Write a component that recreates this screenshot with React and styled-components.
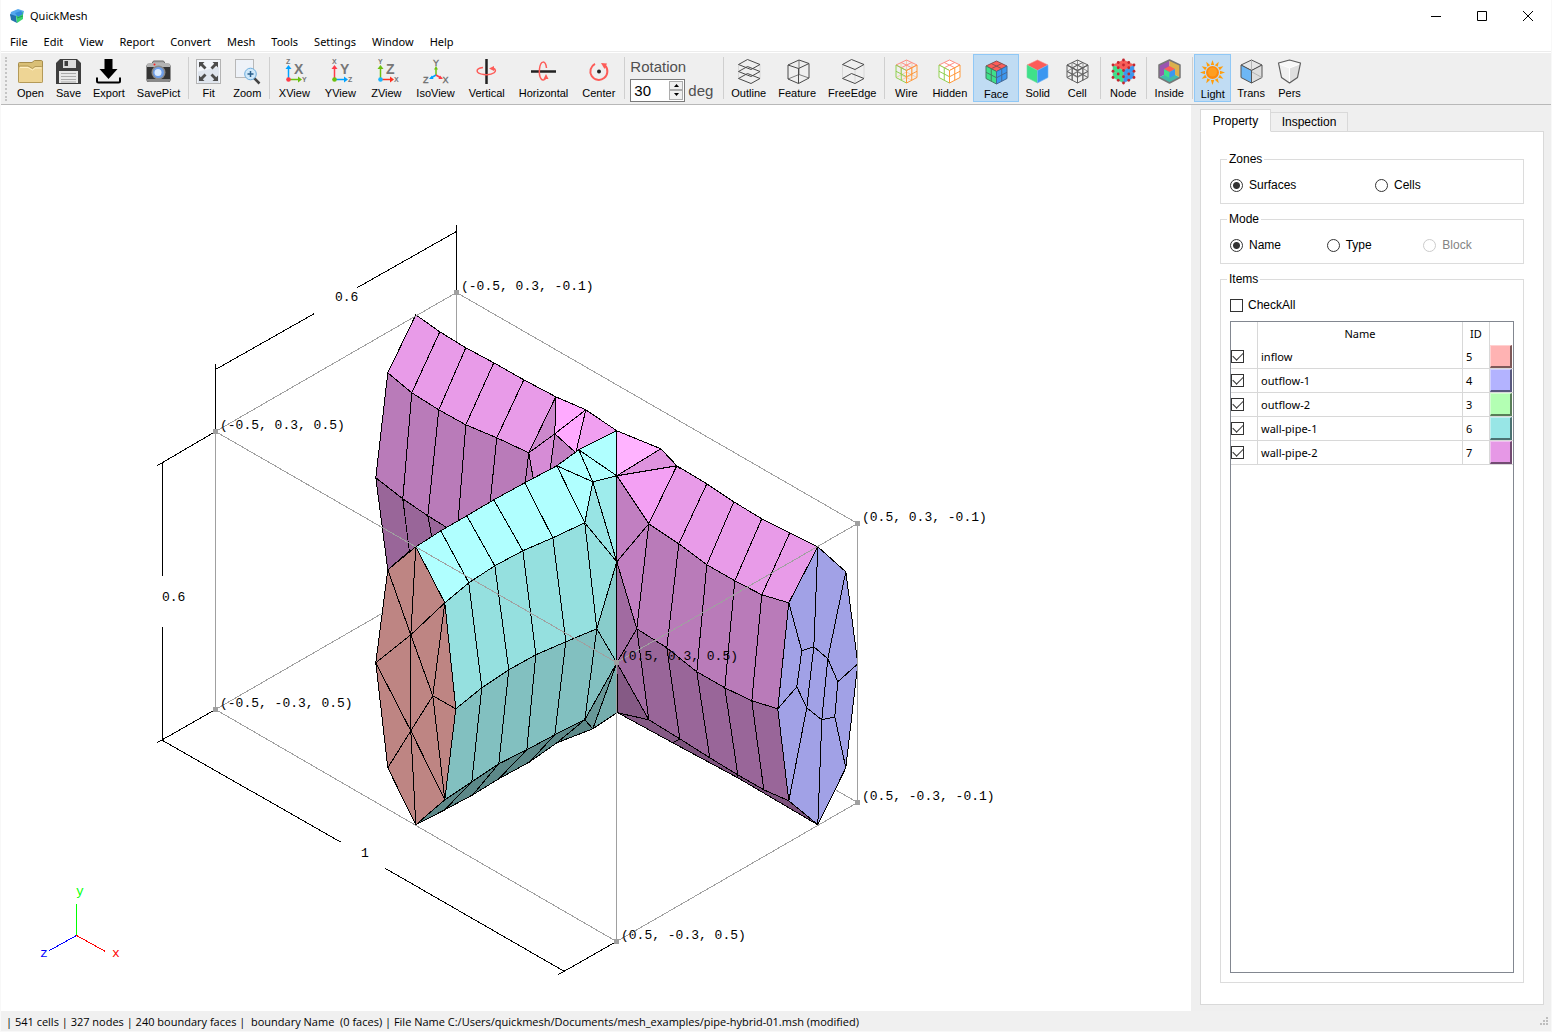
import React, { useState } from 'react';
import styled, { createGlobalStyle, css } from 'styled-components';

const GlobalStyle = createGlobalStyle`
  html, body, #root {
    height: 100%;
  }

  body {
    margin: 0;
    background-color: #fff;
    color: #000;
    font-family: 'Noto Sans', 'Open Sans', sans-serif;
    font-size: 11px;
  }

  * {
    box-sizing: border-box;
  }
`;

const arial = "'Liberation Sans', Arial, sans-serif";

const Window = styled.div`
  display: flex;
  flex-direction: column;
  height: 100%;
  min-height: 600px;
  border: 1px solid #f8f8f8;
  border-top: none;
`;

const TitleBar = styled.header`
  display: flex;
  align-items: center;
  height: 31px;
  padding-left: 8px;
`;

const Title = styled.h1`
  flex: 1;
  margin: 0 0 0 5px;
  font-size: 11px;
  font-weight: 400;
`;

const CaptionButton = styled.button`
  display: flex;
  align-items: center;
  justify-content: center;
  width: 46px;
  height: 30px;
  padding: 0;
  border: none;
  background: none;
`;

const MenuBar = styled.nav`
  display: flex;
  align-items: center;
  height: 21px;
  padding-left: 1px;
  border-bottom: 1px solid #ececec;
`;

const MenuButton = styled.button`
  padding: 0 8px;
  border: none;
  background: none;
  font: inherit;
  color: inherit;
`;

const ToolBar = styled.div`
  display: flex;
  align-items: center;
  height: 53px;
  padding: 0 0 2px 10px;
  border-top: 1px solid #fff;
  border-bottom: 1px solid #b8b8b8;
  background-color: #efefef;
  font-family: ${arial};
  position: relative;

  &::before {
    content: '';
    position: absolute;
    left: 4px;
    top: 4px;
    bottom: 3px;
    border-left: 2px dotted #c4c4c4;
  }
`;

const Separator = styled.div`
  width: 1px;
  height: 42px;
  margin: 0 1px 0 2px;
  background-color: #cfcfcf;
`;

const ToolButton = styled.button`
  display: flex;
  flex-direction: column;
  align-items: center;
  gap: 2px;
  height: 48px;
  min-width: ${(props) => props.$minWidth}px;
  padding: 4px ${(props) => props.$pad}px 0;
  border: 1px solid transparent;
  background: none;
  font-family: inherit;
  font-size: 11px;
  line-height: 14px;
  color: #000;

  ${(props) => props.$active && css`
    padding-top: 5px;
    border-color: #90c8f6;
    background-color: #c0dcf3;
  `}
`;

const Icon = styled.svg`
  width: 25px;
  height: 25px;
  flex: none;
  overflow: visible;
`;

const Rotation = styled.div`
  display: flex;
  flex-direction: column;
  gap: 4px;
  width: 95px;
  margin-top: 4px;
  padding-left: 4px;
  font-size: 15px;
  line-height: 17px;
  color: #505050;
`;

const RotationRow = styled.div`
  display: flex;
  align-items: center;
  gap: 3px;
`;

const SpinBox = styled.div`
  display: flex;
  width: 55px;
  height: 23px;
  padding: 1px;
  border: 1px solid #7a7a7a;
  background-color: #fff;
`;

const SpinInput = styled.input`
  flex: 1;
  min-width: 0;
  padding: 0 2px;
  border: none;
  outline: none;
  font-family: inherit;
  font-size: 15px;
`;

const SpinButtons = styled.div`
  display: flex;
  flex-direction: column;
  width: 14px;
`;

const SpinButton = styled.button`
  display: flex;
  align-items: center;
  justify-content: center;
  flex: 1;
  padding: 0;
  border: 1px solid #acacac;
  background-color: #f0f0f0;
`;

const Main = styled.main`
  display: flex;
  flex: 1;
  min-height: 0;
`;

const Viewport = styled.section`
  flex: 1;
  min-width: 0;
  background-color: #fff;
`;

const Scene = styled.svg`
  display: block;
  width: 100%;
  height: 100%;
`;

const Side = styled.aside`
  display: flex;
  flex-direction: column;
  width: 360px;
  padding: 5px 7px 6px 9px;
  background-color: #efefef;
  font-family: ${arial};
  font-size: 12px;
`;

const Tabs = styled.div`
  display: flex;
  align-items: flex-end;
  height: 22px;
  margin-bottom: -1px;
  z-index: 1;
`;

const Tab = styled.button`
  height: ${(props) => (props.$active ? 23 : 20)}px;
  width: ${(props) => (props.$active ? 71 : 77)}px;
  padding: 0;
  border: 1px solid #d9d9d9;
  border-left-width: ${(props) => (props.$active ? 1 : 0)}px;
  border-bottom-color: ${(props) => (props.$active ? '#fff' : '#d9d9d9')};
  background-color: ${(props) => (props.$active ? '#fff' : '#f0f0f0')};
  font: inherit;
  color: #000;
`;

const Pane = styled.div`
  display: flex;
  flex-direction: column;
  gap: 8px;
  flex: 1;
  min-height: 0;
  padding: 20px 19px 21px;
  border: 1px solid #d9d9d9;
  background-color: #fff;
`;

const Group = styled.fieldset`
  display: flex;
  flex-direction: column;
  min-width: 0;
  min-height: 0;
  margin: 0;
  padding: 10px 9px 9px;
  border: 1px solid #dcdcdc;
  ${(props) => props.$grow && css`
    flex: 1;
  `}
`;

const Legend = styled.legend`
  margin-left: -3px;
  padding: 0 2px;
  line-height: 14px;
`;

const Options = styled.div`
  display: grid;
  grid-template-columns: repeat(${(props) => props.$columns}, 1fr);
  gap: 6px;
`;

const Label = styled.label`
  display: flex;
  align-items: center;
  gap: ${(props) => (props.$tight ? 5 : 6)}px;
  height: 18px;
  color: ${(props) => (props.$disabled ? '#838383' : '#000')};
`;

const Radio = styled.input`
  appearance: none;
  width: 13px;
  height: 13px;
  margin: 0;
  border: 1px solid #333;
  border-radius: 50%;
  background-color: #fff;

  &:checked {
    background-image: radial-gradient(circle, #333 0 3px, #fff 4px);
  }

  &:disabled {
    border-color: #ccc;
  }
`;

const Check = styled.input`
  appearance: none;
  display: block;
  position: relative;
  width: 13px;
  height: 13px;
  margin: 0;
  border: 1px solid #333;
  background-color: #fff;

  &:checked::after {
    content: '';
    position: absolute;
    left: 1px;
    top: 1px;
    width: 9px;
    height: 5px;
    border: solid #333;
    border-width: 0 0 1px 1px;
    transform: rotate(-45deg);
  }
`;

const TableFrame = styled.div`
  flex: 1;
  min-height: 0;
  margin-top: 7px;
  border: 1px solid #828790;
`;

const Table = styled.table`
  width: 100%;
  table-layout: fixed;
  border-collapse: separate;
  border-spacing: 0;
  font-family: 'Noto Sans', 'Open Sans', sans-serif;
  font-size: 11px;

  th, td {
    padding: 0;
    border-right: 1px solid #d8d8d8;
    font-weight: 400;
    line-height: 14px;
  }

  th {
    height: 23px;
  }

  td {
    height: 24px;
    padding-left: 3px;
    border-bottom: 1px solid #d8d8d8;
  }

  td:first-child, td:last-child {
    padding-left: 0;
  }

  th:last-child, td:last-child {
    border-right: none;
  }
`;

const CheckColumn = styled.col`
  width: 27px;
`;

const IdColumn = styled.col`
  width: 27px;
`;

const ColorColumn = styled.col`
  width: 23px;
`;

const Swatch = styled.button`
  display: block;
  width: 22px;
  height: 23px;
  padding: 0;
  border: 1px solid rgba(255, 255, 255, 0.4);
  border-right: 2px solid rgba(0, 0, 0, 0.5);
  border-bottom: 2px solid rgba(0, 0, 0, 0.5);
  background-color: ${(props) => props.$color};
`;

const StatusBar = styled.footer`
  display: flex;
  align-items: center;
  justify-content: space-between;
  height: 20px;
  padding: 0 3px 0 5px;
  background-color: #f0f0f0;
  font-family: 'Open Sans', 'Noto Sans', sans-serif;
  white-space: pre;
`;

const menus = ['File', 'Edit', 'View', 'Report', 'Convert', 'Mesh', 'Tools', 'Settings', 'Window', 'Help'];

const RED = '#fd5c58';
const GREEN = '#3fe08a';
const BLUE = '#3b97f0';

// corners of the isometric cube used by most of the display icons
const T = [12.5, 1];
const R = [23, 6];
const L = [2, 6];
const C = [12.5, 11.5];
const B = [12.5, 24];
const LB = [2, 18.5];
const RB = [23, 18.5];
const M = [12.5, 13];

const pts = (list) => list.map((p) => p.join(',')).join(' ');
const mix = (a, b, t) => [a[0] + (b[0] - a[0]) * t, a[1] + (b[1] - a[1]) * t];

const gridPath = (a, b, c, d, n) => {
  let path = '';
  for (let i = 0; i <= n; i += 1) {
    path += `M${mix(a, b, i / n)}L${mix(d, c, i / n)}M${mix(a, d, i / n)}L${mix(b, c, i / n)}`;
  }
  return path;
};

const Cube = ({ fill = ['none', 'none', 'none'], line = ['none', 'none', 'none'], n = 1, width = 1 }) => (
  <g strokeLinejoin="round">
    {[[T, R, C, L], [L, C, B, LB], [C, R, RB, B]].map((face, i) => (
      <g key={i}>
        <polygon points={pts(face)} fill={fill[i]} />
        <path d={gridPath(...face, n)} fill="none" stroke={line[i]} strokeWidth={width} />
      </g>
    ))}
  </g>
);

const AxisIcon = ({ big, up, right, upColor, rightColor, dot }) => (
  <Icon viewBox="0 0 25 25" fontFamily="Liberation Sans" fill="#777">
    <path d="M6.5 20V9" stroke={upColor} strokeWidth="1.5" />
    <path d="M3.5 10L6.5 6L9.5 10Z" fill={upColor} />
    <path d="M7 20.5H17" stroke={rightColor} strokeWidth="1.5" />
    <path d="M16 17.5L20 20.5L16 23.5Z" fill={rightColor} />
    <circle cx="6.5" cy="20.5" r="2.3" fill={dot} />
    <text x="4" y="5" fontSize="7" fontWeight="700">{up}</text>
    <text x="20" y="23" fontSize="7" fontWeight="700">{right}</text>
    <text x="12" y="15" fontSize="14" fontWeight="700">{big}</text>
  </Icon>
);

const layer = (y) => `M11.500 ${y}L24 ${y + 5}L15 ${y + 10}L2.500 ${y + 5}Z`;

const icons = {
  Open: (
    <Icon viewBox="0 0 25 25">
      <path d="M.5 23V4.500Q.5 3.500 1.500 3.500H14L16.500 1.500H23.500Q24.500 1.500 24.500 3V23Z" fill="#d9bf76" stroke="#a68d4d" />
      <path d="M.5 9Q.5 7 2 7H10L14.500 9.500L17 7.500H23.500Q24.500 7.500 24.500 9V22.500Q24.500 23.500 23.500 23.500H1.500Q.5 23.500.5 22.500Z" fill="#eed595" stroke="#b49a58" />
      <path d="M2 8.500H10L14.500 11L17.500 9H23.500" fill="none" stroke="#fff0c4" />
    </Icon>
  ),
  Save: (
    <Icon viewBox="0 0 25 25">
      <path d="M4 0H21L25 4V25H0V4Z" fill="#3e3e3e" />
      <path d="M7 1H20V9H7Z" fill="#dcdcdc" />
      <path d="M8.500 2H12V7H8.500Z" fill="#3e3e3e" />
      <path d="M3 12H22V24H3Z" fill="#e8e8e8" />
      <path d="M5 14.500H20M5 17.500H20M5 20.500H20M5 23H20" stroke="#aaa" />
    </Icon>
  ),
  Export: (
    <Icon viewBox="0 0 25 25">
      <path d="M8.500 0H16.500V10H21.500L12.500 20L3.500 10H8.500Z" />
      <path d="M1 18.500V22Q1 23.500 2.500 23.500H22.500Q24 23.500 24 22V18.500" fill="none" stroke="#000" strokeWidth="2" />
    </Icon>
  ),
  SavePict: (
    <Icon viewBox="0 0 25 25">
      <path d="M5 6L7.500 2H17.500L20 6Z" fill="#aaa" stroke="#666" />
      <rect x="0.5" y="5" width="24" height="18" rx="2" fill="#343434" />
      <path d="M1 8V6Q1 4 3 4H22Q24 4 24 6V8Z" fill="#b4b4b4" />
      <path d="M1 20H24V22Q23 23 22 23H3Q2 23 1 22Z" fill="#888" />
      <circle cx="12.500" cy="13.500" r="7" fill="#898989" />
      <circle cx="12.500" cy="13.500" r="5.500" fill="#6e9ee8" />
      <circle cx="12" cy="13.500" r="3.500" fill="#d9eaff" />
      <circle cx="8.500" cy="5.500" r="1" fill="#f22" />
    </Icon>
  ),
  Fit: (
    <Icon viewBox="0 0 25 25">
      <rect x="0.5" y="0.5" width="24" height="24" fill="#f2f5fa" stroke="#b3b3b3" />
      <path d="M2 12.500L23 8V24H2Z" fill="#dfe5ee" />
      <path
        d="M3 3H8.500L6.800 4.800L10.500 8.500L8.500 10.500L4.800 6.800L3 8.500ZM22 3V8.500L20.200 6.800L16.500 10.500L14.500 8.500L18.200 4.800L16.500 3ZM3 22V16.500L4.800 18.200L8.500 14.500L10.500 16.500L6.800 20.200L8.500 22ZM22 22H16.500L18.200 20.200L14.500 16.500L16.500 14.500L20.200 18.200L22 16.500Z"
        fill="#4c4c4c"
      />
    </Icon>
  ),
  Zoom: (
    <Icon viewBox="0 0 25 25">
      <rect x="0.5" y="0.5" width="18" height="18" fill="#eef2f8" stroke="#b8b8b8" />
      <path d="M19 19L24.500 24.500" stroke="#444" strokeWidth="2.500" />
      <circle cx="15.500" cy="15" r="5.800" fill="#cfe8fa" stroke="#6eaede" />
      <path d="M15.500 12V18M12.500 15H18.500" stroke="#2a5f8c" strokeWidth="1.500" />
    </Icon>
  ),
  XView: <AxisIcon big="X" up="Z" right="Y" upColor="#00a2ff" rightColor="#6cc00e" dot="#ff3a48" />,
  YView: <AxisIcon big="Y" up="X" right="Z" upColor="#ff3a48" rightColor="#00a2ff" dot="#6cc00e" />,
  ZView: <AxisIcon big="Z" up="Y" right="X" upColor="#6cc00e" rightColor="#ff3020" dot="#18b4ff" />,
  IsoView: (
    <Icon viewBox="0 0 25 25" fontFamily="Liberation Sans" fontSize="9" fill="#6c6c6c" stroke="#6c6c6c" strokeWidth="0.3">
      <g strokeWidth="1.500">
        <path d="M13 16V9" stroke="#6cc00e" />
        <path d="M13 16L8 19" stroke="#00a2ff" />
        <path d="M13 16L18 19" stroke="#ff3a48" />
      </g>
      <g stroke="none">
        <path d="M11 10.500L13 7L15 10.500Z" fill="#6cc00e" />
        <path d="M9 16.500L6 20L10.500 20Z" fill="#00a2ff" />
        <path d="M17 16.500L20 20L15.500 20Z" fill="#ff3a48" />
      </g>
      <text x="10" y="6.500">Y</text>
      <text x="0" y="24">Z</text>
      <text x="19.500" y="24">X</text>
    </Icon>
  ),
  Vertical: (
    <Icon viewBox="0 0 25 25">
      <path d="M12.500 0V25" stroke="#222" strokeWidth="2.500" />
      <path d="M9 8.500C1 9.500 1 14.500 10 15.500C19 16.500 25 12 19 9" fill="none" stroke={RED} strokeWidth="1.500" />
      <path d="M15 9.500L20 7L20 12Z" fill={RED} />
    </Icon>
  ),
  Horizontal: (
    <Icon viewBox="0 0 25 25">
      <path d="M0 12.500H25" stroke="#222" strokeWidth="2.500" />
      <path d="M15.500 9C14.500 1 9.500 1 8.500 10C7.500 19 11.500 24 15 19" fill="none" stroke={RED} strokeWidth="1.500" />
      <path d="M15 15L17.500 20L12.500 20Z" fill={RED} />
    </Icon>
  ),
  Center: (
    <Icon viewBox="0 0 25 25">
      <path d="M9 4.800A8.500 8.500 0 1 0 19 6.500" fill="none" stroke={RED} strokeWidth="2" />
      <path d="M15 4L21 4.500L18.500 10Z" fill={RED} />
      <circle cx="13" cy="12.500" r="2" fill="#222" />
    </Icon>
  ),
  Outline: (
    <Icon viewBox="0 0 25 25" fill="none" stroke="#4a4a4a">
      <path d="M2.500 5V20M24 5V20" stroke="#d8d8d8" />
      <path d={layer(0.5)} />
      <path d={layer(7.5)} />
      <path d={layer(14.5)} />
    </Icon>
  ),
  Feature: (
    <Icon viewBox="0 0 25 25" fill="none" stroke="#4a4a4a" strokeLinejoin="round">
      <path d="M14 1L24 4.500L13.500 9.500L3 6ZM3 6V20L13.500 24.500V9.500M13.500 24.500L24 19V4.500" />
      <path d="M14 1V15.500L3 20M14 15.500L24 19" strokeWidth="0.7" />
    </Icon>
  ),
  FreeEdge: (
    <Icon viewBox="0 0 25 25" fill="none" stroke="#4a4a4a">
      <path d="M2.500 5V19M15 10V23M24 5V19" stroke="#d8d8d8" />
      <path d={layer(0.5)} />
      <path d={layer(14.5)} />
    </Icon>
  ),
  Wire: (
    <Icon viewBox="0 0 25 25">
      <path d="M2 18.500L12.500 13L23 18.500M12.500 13V1M7 4V16L17.500 21M18 4V16L7 21" stroke="#f6bd8e" fill="none" strokeWidth="0.7" />
      <Cube n={2} line={['#ff8d84', '#90d050', '#ff9838']} />
    </Icon>
  ),
  Hidden: (
    <Icon viewBox="0 0 25 25">
      <Cube n={2} fill={['#fff', '#fff', '#fff']} line={['#ff8d84', '#90d050', '#ff9838']} />
    </Icon>
  ),
  Face: (
    <Icon viewBox="0 0 25 25">
      <Cube n={2} fill={[RED, GREEN, BLUE]} line={['#8a5252', '#477b65', '#446995']} />
    </Icon>
  ),
  Solid: (
    <Icon viewBox="0 0 25 25">
      <Cube fill={[RED, GREEN, BLUE]} line={['#f48a86', '#70dc9f', '#73b5f5']} width={0.6} />
    </Icon>
  ),
  Cell: (
    <Icon viewBox="0 0 25 25">
      <Cube n={2} line={['#4f4f4f', '#4f4f4f', '#4f4f4f']} width={0.9} />
      <path
        d="M2 6L23 18.500M23 6L2 18.500M7 4V21.500M18 4V21.500M12.500 1V24M2 12.500L12.500 6L23 12.500L12.500 18.500ZM2 18.500L12.500 13L23 18.500"
        fill="none"
        stroke="#666"
        strokeWidth="0.7"
      />
    </Icon>
  ),
  Node: (
    <Icon viewBox="0 0 25 25">
      <Cube fill={[RED, GREEN, BLUE]} n={2} line={['#dc6661', '#72cba1', '#6f9fd1']} width={0.6} />
      {[
        T, R, L, C, B, LB, RB, mix(T, R, 0.5), mix(T, L, 0.5), mix(L, C, 0.5), mix(C, R, 0.5), [12.5, 6],
        mix(L, LB, 0.5), mix(R, RB, 0.5), mix(C, B, 0.5), mix(LB, B, 0.5), mix(B, RB, 0.5), [7.2, 15], [17.8, 15],
      ].map((p, i) => (
        <circle key={i} cx={p[0]} cy={p[1]} r="1.4" fill="#c4262e" />
      ))}
    </Icon>
  ),
  Inside: (
    <Icon viewBox="0 0 25 25" strokeLinejoin="round">
      <polygon points={pts([T, M, LB, L])} fill="#9a55b0" />
      <polygon points={pts([T, R, RB, M])} fill="#dbb04c" />
      <polygon points={pts([LB, M, RB, B])} fill="#43b9a8" />
      <polygon points="12.500,7 18,10 12.500,13 7,10" fill={RED} />
      <polygon points="7,10 12.500,13 12.500,19 7,16" fill={GREEN} />
      <polygon points="18,10 12.500,13 12.500,19 18,16" fill={BLUE} />
      <polygon points={pts([T, R, RB, B, LB, L])} fill="none" stroke="#777" strokeWidth="1.500" />
    </Icon>
  ),
  Light: (
    <Icon viewBox="0 0 25 25">
      <g fill="#ff9d0a">
        {[0, 30, 60, 90, 120, 150, 180, 210, 240, 270, 300, 330].map((a) => (
          <path key={a} d="M10.800 5L12.500 0L14.200 5Z" transform={`rotate(${a} 12.500 12.500)`} />
        ))}
      </g>
      <circle cx="12.500" cy="12.500" r="6.500" fill="#ff8a0c" />
      <circle cx="12.500" cy="12" r="4.500" fill="#ff9e20" />
    </Icon>
  ),
  Trans: (
    <Icon viewBox="0 0 25 25" stroke="#555" strokeLinejoin="round">
      <polygon points={pts([T, R, C, L])} fill="#e6e6e6" />
      <polygon points={pts([C, R, RB, B])} fill="#dedede" />
      <polygon points={pts([L, C, B, LB])} fill="#6db7f5" />
      <path d="M12.500 1V11M23 18.500L13 13" fill="none" stroke="#aaa" strokeWidth="0.8" />
    </Icon>
  ),
  Pers: (
    <Icon viewBox="0 0 25 25" strokeLinejoin="round">
      <polygon points="12.500,9 23,4.500 20.500,18.500 12.500,24" fill="#dfdfdf" />
      <polygon points="12.500,9 2,4.500 4.500,18.500 12.500,24" fill="#f0f0f0" />
      <polygon points="12.500,1 23.500,4.500 12.500,9 1.500,4.500" fill="#f8f8f8" />
      <path d="M2 5L12.500 9L23 5M12.500 9V23" fill="none" stroke="#fff" />
      <polygon points="12.500,1 23.500,4 20.500,18.500 12.500,24 4.500,18.500 1.500,4" fill="none" stroke="#5c5c5c" strokeWidth="1.200" />
    </Icon>
  ),
};

const leftTools = [
  { pad: 5, names: ['Open', 'Save', 'Export', 'SavePict'] },
  { pad: 5, names: ['Fit', 'Zoom'] },
  { pad: 6, names: ['XView', 'YView', 'ZView', 'IsoView', 'Vertical', 'Horizontal', 'Center'] },
];

const rightTools = [
  { pad: 5, names: ['Outline', 'Feature', 'FreeEdge'] },
  { pad: 5, names: ['Wire', 'Hidden', 'Face', 'Solid', 'Cell'] },
  { pad: 5, names: ['Node'] },
  { pad: 5, names: ['Inside'] },
  { pad: 5, names: ['Light', 'Trans', 'Pers'] },
];

const minWidths = { XView: 46, YView: 46, ZView: 46, Face: 46, Inside: 42, Wire: 40, Cell: 42, Node: 42 };

// mesh faces: [fill, "x,y ..."]
const faces = [
  // far branch
  ['#e89be8', '416,315 440,332 412,393 388,373'],
  ['#e89be8', '440,332 466,348 439,410 412,393'],
  ['#e89be8', '466,348 494,363 466,425 439,410'],
  ['#e89be8', '494,363 524,380 497,438 466,425'],
  ['#e89be8', '524,380 556,397 529,453 497,438'],
  ['#b97bb9', '388,373 412,393 403,499 376,478'],
  ['#b97bb9', '412,393 439,410 428,516 403,499'],
  ['#b97bb9', '439,410 466,425 458,526 449,529 428,516'],
  ['#b97bb9', '466,425 497,438 490,506 458,526'],
  ['#b97bb9', '497,438 529,453 525,487 490,506'],
  ['#996699', '376,478 403,499 410,551 388,570'],
  ['#996699', '403,499 428,516 433,542 410,555'],
  ['#996699', '428,516 449,529 433,542'],
  ['#cc88cc', '529,453 556,397 555,434'],
  ['#ffaaff', '556,397 586,410 555,434'],
  ['#ffaaff', '586,410 576,453 555,434'],
  ['#f09ff0', '586,410 617,431 576,453'],
  ['#b97bb9', '529,453 534,482 525,487'],
  ['#d68cd6', '529,453 555,434 550,473 534,482'],
  ['#c27fc2', '555,434 576,453 557,469 550,473'],
  // inflow branch
  ['#b0ffff', '416,547 441,531 469,583 445,603'],
  ['#b0ffff', '441,531 467,516 495,566 469,583'],
  ['#b0ffff', '467,516 494,500 523,551 495,566'],
  ['#b0ffff', '494,500 525,483 553,538 523,551'],
  ['#b0ffff', '525,483 557,466 585,523 553,538'],
  ['#b0ffff', '557,466 593,482 585,523'],
  ['#b0ffff', '557,466 579,450 593,482'],
  ['#b0ffff', '579,450 617,476 593,482'],
  ['#b0ffff', '579,450 617,431 617,476'],
  ['#9eecec', '593,482 617,476 617,562'],
  ['#98e4e4', '585,523 593,482 617,562'],
  ['#95e0df', '445,603 469,583 482,688 456,709'],
  ['#95e0df', '469,583 495,566 509,670 482,688'],
  ['#95e0df', '495,566 523,551 536,655 509,670'],
  ['#95e0df', '523,551 553,538 566,642 536,655'],
  ['#95e0df', '553,538 585,523 597,629 566,642'],
  ['#95e0df', '585,523 617,562 597,629'],
  ['#88cccb', '597,629 617,562 617,663'],
  ['#82c0c0', '456,709 482,688 472,782 445,800'],
  ['#82c0c0', '482,688 509,670 499,764 472,782'],
  ['#82c0c0', '509,670 536,655 527,750 499,764'],
  ['#82c0c0', '536,655 566,642 555,735 527,750'],
  ['#82c0c0', '566,642 597,629 585,720 555,735'],
  ['#82c0c0', '597,629 617,663 585,720'],
  ['#689797', '617,663 593,729 585,720'],
  ['#75adad', '617,663 617,713 593,729'],
  ['#5c8888', '445,800 472,782 445,810 416,825'],
  ['#5c8888', '472,782 499,764 473,795 445,810'],
  ['#5c8888', '499,764 527,750 499,779 473,795'],
  ['#5c8888', '527,750 555,735 530,762 499,779'],
  ['#5c8888', '555,735 585,720 557,743 530,762'],
  ['#5c8888', '585,720 593,729 557,743'],
  // inflow cap
  ['#be8583', '388,570 416,547 411,635'],
  ['#be8583', '416,547 445,603 411,635'],
  ['#be8583', '388,570 411,635 376,663'],
  ['#be8583', '376,663 411,635 411,731'],
  ['#be8583', '411,635 433,696 411,731'],
  ['#be8583', '411,635 445,603 433,696'],
  ['#be8583', '445,603 456,709 433,696'],
  ['#be8583', '433,696 456,709 445,800'],
  ['#be8583', '433,696 445,800 411,731'],
  ['#be8583', '376,663 411,731 388,768'],
  ['#be8583', '388,768 411,731 416,825'],
  ['#be8583', '411,731 445,800 416,825'],
  // near branch
  ['#ffb3ff', '617,431 661,449 617,476'],
  ['#de93de', '617,476 661,449 680,469 677,466'],
  ['#f3a0f3', '617,476 677,466 649,524'],
  ['#e89be8', '677,466 707,484 679,544 649,524'],
  ['#e89be8', '707,484 734,502 707,565 679,544'],
  ['#e89be8', '734,502 762,519 735,581 707,565'],
  ['#e89be8', '762,519 790,533 762,595 735,581'],
  ['#e89be8', '790,533 818,547 789,603 762,595'],
  ['#c17fc1', '617,476 649,524 617,562'],
  ['#c17fc1', '617,562 649,524 637,629'],
  ['#b97bb9', '649,524 679,544 667,648 637,629'],
  ['#b97bb9', '679,544 707,565 697,672 667,648'],
  ['#b97bb9', '707,565 735,581 725,688 697,672'],
  ['#b97bb9', '735,581 762,595 752,701 725,688'],
  ['#b97bb9', '762,595 789,603 778,709 752,701'],
  ['#a16ba1', '617,562 637,629 617,663'],
  ['#a16ba1', '637,629 649,720 617,663'],
  ['#855a85', '617,663 649,720 618,713'],
  ['#855a85', '618,713 649,720 680,739 673,743'],
  ['#7c527c', '680,739 710,758 738,775 738,778 673,743'],
  ['#7c527c', '738,775 764,790 789,801 818,825 738,778'],
  ['#996699', '637,629 667,648 680,739 649,720'],
  ['#996699', '667,648 697,672 710,758 680,739'],
  ['#996699', '697,672 725,688 738,775 710,758'],
  ['#996699', '725,688 752,701 764,790 738,775'],
  ['#996699', '752,701 778,709 789,801 764,790'],
  // outflow cap
  ['#a1a1e6', '818,547 846,572 858,664 846,768 818,825 789,801 778,709 789,603'],
];

const capLines = 'M802,651L814,647L828,659L838,682L835,717L822,720L807,708L797,687Z'
  + 'M789,603L802,651M818,547L814,647L807,708M846,572L828,659L822,720M858,664L838,682M846,768L835,717'
  + 'M818,825L822,720M789,801L807,708M778,709L797,687';

const corners = [
  [456, 292, '(-0.5, 0.3, -0.1)'],
  [215, 431, '(-0.5, 0.3, 0.5)'],
  [857, 523, '(0.5, 0.3, -0.1)'],
  [616, 662, '(0.5, 0.3, 0.5)'],
  [215, 709, '(-0.5, -0.3, 0.5)'],
  [857, 802, '(0.5, -0.3, -0.1)'],
  [616, 941, '(0.5, -0.3, 0.5)'],
];

const dimensions = 'M456,224V292M456,231L357,287M314,313L215,369M215,363V431M215,431L157,465'
  + 'M162,462V575M162,626V740M157,742L215,709M162,740L341,842M385,868L564,971M558,974L616,941';

const MeshScene = () => (
  <Scene viewBox="1 105 1190 906" fontFamily="Liberation Mono, monospace" fontSize="13">
    <g transform="translate(0.5 0.5)" fill="none" shapeRendering="crispEdges">
      <path d="M456,292V570L857,802M456,570L215,709" stroke="#a0a0a0" />
      <g transform="translate(-0.7 -0.7)" stroke="#000" strokeLinejoin="round">
        {faces.map(([fill, points]) => (
          <polygon key={points} points={points} fill={fill} />
        ))}
        <path d={capLines} />
        <path d="M661,449L680,469" />
      </g>
      <path
        d="M456,292L857,523L616,662L215,431ZM215,431V709L616,941V662M857,523V802L616,941"
        stroke="#a0a0a0"
      />
      <path d={dimensions} stroke="#000" />
      <path d="M76,903V935" stroke="#0f0" />
      <path d="M76,935L49,950" stroke="#00f" />
      <path d="M76,935L105,951" stroke="#f00" />
    </g>
    {corners.map(([x, y, label]) => (
      <g key={label}>
        <rect x={x - 2} y={y - 2} width="5" height="5" fill="#a0a0a0" />
        <text x={x + 5} y={y - 2}>{label}</text>
      </g>
    ))}
    <text x="335" y="301">0.6</text>
    <text x="162" y="601">0.6</text>
    <text x="361" y="857">1</text>
    <text x="76" y="895" fill="#0f0">y</text>
    <text x="40" y="957" fill="#00f">z</text>
    <text x="112" y="957" fill="#f00">x</text>
  </Scene>
);

const initialItems = [
  { name: 'inflow', id: 5, color: '#ffb3b3', checked: true },
  { name: 'outflow-1', id: 4, color: '#b3b3ff', checked: true },
  { name: 'outflow-2', id: 3, color: '#b3ffb3', checked: true },
  { name: 'wall-pipe-1', id: 6, color: '#98e6e6', checked: true },
  { name: 'wall-pipe-2', id: 7, color: '#e698e6', checked: true },
];

const RadioOption = ({ group, label, value, onChange, disabled }) => (
  <Label $disabled={disabled}>
    <Radio
      type="radio"
      name={group}
      checked={value === label}
      disabled={disabled}
      onChange={() => onChange(label)}
    />
    {label}
  </Label>
);

const PropertyPane = () => {
  const [zone, setZone] = useState('Surfaces');
  const [mode, setMode] = useState('Name');
  const [checkAll, setCheckAll] = useState(false);
  const [items, setItems] = useState(initialItems);

  const toggleItem = (id) => {
    setItems(items.map((item) => (item.id === id ? { ...item, checked: !item.checked } : item)));
  };

  const toggleAll = (e) => {
    setCheckAll(e.target.checked);
    setItems(items.map((item) => ({ ...item, checked: e.target.checked })));
  };

  return (
    <Pane>
      <Group>
        <Legend>Zones</Legend>
        <Options $columns={2}>
          <RadioOption group="zone" label="Surfaces" value={zone} onChange={setZone} />
          <RadioOption group="zone" label="Cells" value={zone} onChange={setZone} />
        </Options>
      </Group>
      <Group>
        <Legend>Mode</Legend>
        <Options $columns={3}>
          <RadioOption group="mode" label="Name" value={mode} onChange={setMode} />
          <RadioOption group="mode" label="Type" value={mode} onChange={setMode} />
          <RadioOption group="mode" label="Block" value={mode} onChange={setMode} disabled />
        </Options>
      </Group>
      <Group $grow>
        <Legend>Items</Legend>
        <Label $tight>
          <Check type="checkbox" checked={checkAll} onChange={toggleAll} />
          CheckAll
        </Label>
        <TableFrame>
          <Table>
            <colgroup>
              <CheckColumn />
              <col />
              <IdColumn />
              <ColorColumn />
            </colgroup>
            <thead>
              <tr>
                <th aria-label="Visible" />
                <th>Name</th>
                <th>ID</th>
                <th aria-label="Color" />
              </tr>
            </thead>
            <tbody>
              {items.map((item) => (
                <tr key={item.id}>
                  <td>
                    <Check
                      type="checkbox"
                      aria-label={item.name}
                      checked={item.checked}
                      onChange={() => toggleItem(item.id)}
                    />
                  </td>
                  <td>{item.name}</td>
                  <td>{item.id}</td>
                  <td><Swatch $color={item.color} aria-label={`${item.name} color`} /></td>
                </tr>
              ))}
            </tbody>
          </Table>
        </TableFrame>
      </Group>
    </Pane>
  );
};

const App = () => {
  const [angle, setAngle] = useState(30);
  const [display, setDisplay] = useState('Face');
  const [light, setLight] = useState(true);
  const [tab, setTab] = useState('Property');

  const handleTool = (name) => {
    if (['Wire', 'Hidden', 'Face', 'Solid', 'Cell'].includes(name)) {
      setDisplay(name);
    } else if (name === 'Light') {
      setLight(!light);
    }
  };

  const renderTools = ({ pad, names }) => names.map((name) => (
    <ToolButton
      key={name}
      $active={name === display || (name === 'Light' && light)}
      $pad={pad}
      $minWidth={minWidths[name] || 36}
      onClick={() => handleTool(name)}
    >
      {icons[name]}
      {name}
    </ToolButton>
  ));

  return (
    <Window>
      <GlobalStyle />
      <TitleBar>
        <svg width="16" height="16" viewBox="0 0 16 16">
          <path d="M2 4L9 1L15 3L14 7L8 8L1 8Z" fill="#55a8ee" />
          <path d="M1 6L7 8L8 15L2 12Z" fill="#2370ad" />
          <path d="M7 8L14 4L14 11L8 15Z" fill="#39d46e" />
          <path d="M6 5L12 3L14 6L9 9Z" fill="#328bdc" />
          <path d="M8 10L14 8" stroke="#249c57" />
        </svg>
        <Title>QuickMesh</Title>
        <CaptionButton aria-label="Minimize">
          <svg width="10" height="10" stroke="#000"><path d="M0 5.500H10" /></svg>
        </CaptionButton>
        <CaptionButton aria-label="Maximize">
          <svg width="10" height="10" stroke="#000" fill="none"><path d="M.5 .5H9.500V9.500H.5Z" /></svg>
        </CaptionButton>
        <CaptionButton aria-label="Close">
          <svg width="10" height="10" stroke="#000"><path d="M0 0L10 10M10 0L0 10" /></svg>
        </CaptionButton>
      </TitleBar>
      <MenuBar>
        {menus.map((name) => <MenuButton key={name}>{name}</MenuButton>)}
      </MenuBar>
      <ToolBar>
        {leftTools.map((group) => (
          <React.Fragment key={group.names[0]}>
            {renderTools(group)}
            <Separator />
          </React.Fragment>
        ))}
        <Rotation>
          <label htmlFor="rotation">Rotation</label>
          <RotationRow>
            <SpinBox>
              <SpinInput id="rotation" value={angle} onChange={(e) => setAngle(Number(e.target.value) || 0)} />
              <SpinButtons>
                <SpinButton aria-label="Increase" onClick={() => setAngle(angle + 1)}>
                  <svg width="5" height="3"><path d="M0 3L2.500 0L5 3Z" /></svg>
                </SpinButton>
                <SpinButton aria-label="Decrease" onClick={() => setAngle(angle - 1)}>
                  <svg width="5" height="3"><path d="M0 0L2.500 3L5 0Z" /></svg>
                </SpinButton>
              </SpinButtons>
            </SpinBox>
            <span>deg</span>
          </RotationRow>
        </Rotation>
        {rightTools.map((group) => (
          <React.Fragment key={group.names[0]}>
            <Separator />
            {renderTools(group)}
          </React.Fragment>
        ))}
      </ToolBar>
      <Main>
        <Viewport>
          <MeshScene />
        </Viewport>
        <Side>
          <Tabs role="tablist">
            {['Property', 'Inspection'].map((name) => (
              <Tab key={name} role="tab" $active={tab === name} onClick={() => setTab(name)}>{name}</Tab>
            ))}
          </Tabs>
          {tab === 'Property' ? <PropertyPane /> : <Pane />}
        </Side>
      </Main>
      <StatusBar>
        <span>
          {'| 541 cells | 327 nodes | 240 boundary faces |  boundary Name  (0 faces) | File Name C:/Users/quickmesh/Documents/mesh_examples/pipe-hybrid-01.msh (modified)'}
        </span>
        <svg width="8" height="8" fill="#bdbdbd">
          <path d="M6 0H8V2H6ZM3 3H5V5H3ZM6 3H8V5H6ZM0 6H2V8H0ZM3 6H5V8H3ZM6 6H8V8H6Z" />
        </svg>
      </StatusBar>
    </Window>
  );
};

export default App;
